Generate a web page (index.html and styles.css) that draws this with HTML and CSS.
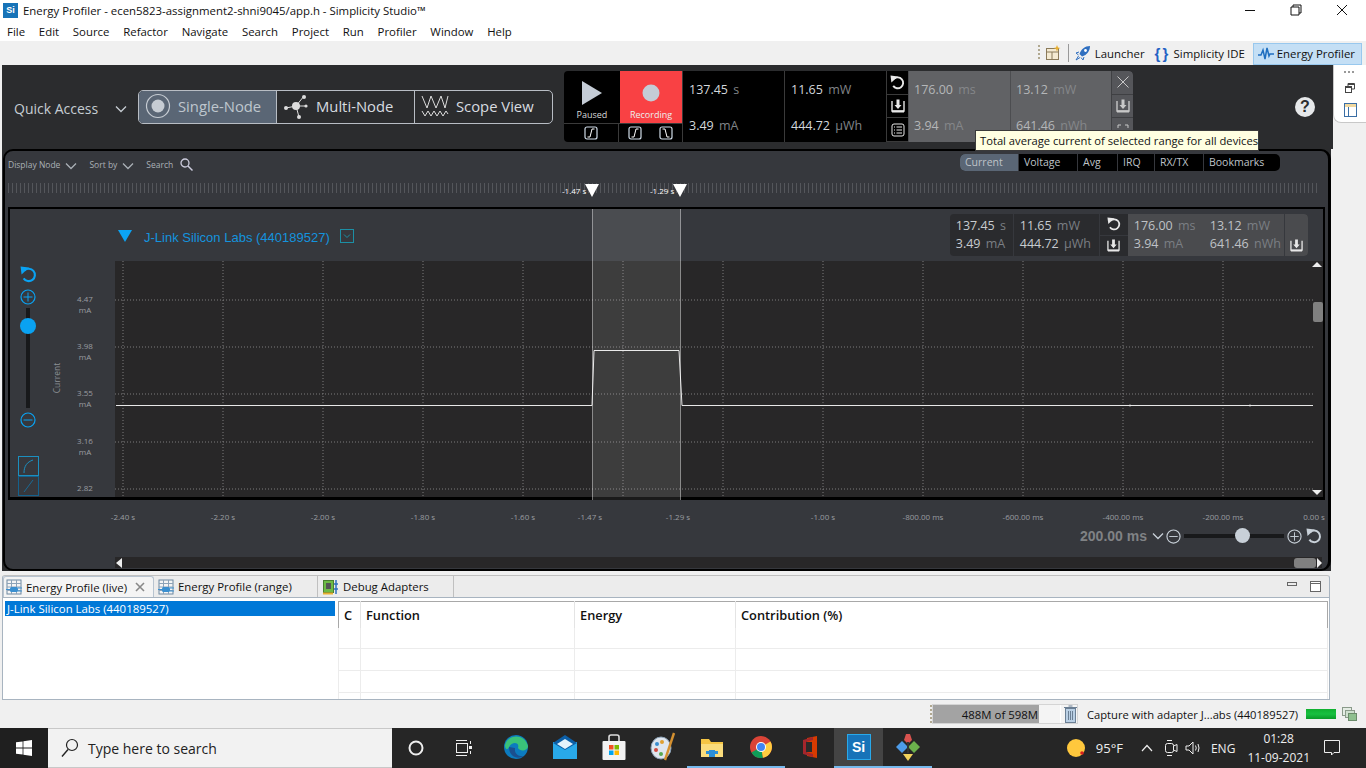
FILE: index.html
```html
<!DOCTYPE html>
<html lang="en">
<head>
    <meta charset="UTF-8">
    <title>Energy Profiler - Simplicity Studio</title>
    <link rel="stylesheet" href="styles.css">
</head>
<body>
<svg class="defs" width="0" height="0">
    <symbol id="i-reset" viewBox="0 0 16 16">
        <path d="M4.2 4.2 A5.8 5.8 0 1 1 3.4 11.6" fill="none" stroke="currentColor" stroke-width="2"/>
        <path d="M0.5 0.5 L8.5 1.5 L1.5 8 Z" fill="currentColor"/>
    </symbol>
    <symbol id="i-save" viewBox="0 0 14 14">
        <path d="M5.5 0.5 H8.5 V6 H10.5 L7 10 L3.5 6 H5.5 Z" fill="currentColor"/>
        <path d="M1 2 V12 H13 V2" fill="none" stroke="currentColor" stroke-width="1.4"/>
        <path d="M1 12.5 H13" stroke="currentColor" stroke-width="2"/>
    </symbol>
    <symbol id="i-chev" viewBox="0 0 12 8">
        <path d="M1 1.5 L6 6.5 L11 1.5" fill="none" stroke="currentColor" stroke-width="1.3"/>
    </symbol>
    <symbol id="i-plus" viewBox="0 0 16 16">
        <circle cx="8" cy="8" r="7" fill="none" stroke="currentColor" stroke-width="1.2"/>
        <path d="M3.5 8 H12.5 M8 3.5 V12.5" stroke="currentColor"/>
    </symbol>
    <symbol id="i-minus" viewBox="0 0 16 16">
        <circle cx="8" cy="8" r="7" fill="none" stroke="currentColor" stroke-width="1.2"/>
        <path d="M3.5 8 H12.5" stroke="currentColor"/>
    </symbol>
    <symbol id="i-rise" viewBox="0 0 14 14">
        <rect x="1" y="1" width="12" height="12" rx="2" fill="none" stroke="currentColor" stroke-width="1.2"/>
        <path d="M3.5 11 H6 L8 3 H10.5" fill="none" stroke="#fff"/>
    </symbol>
    <symbol id="i-fall" viewBox="0 0 14 14">
        <rect x="1" y="1" width="12" height="12" rx="2" fill="none" stroke="currentColor" stroke-width="1.2"/>
        <path d="M3.5 3 H6 L8 11 H10.5" fill="none" stroke="#fff"/>
    </symbol>
    <symbol id="i-view" viewBox="0 0 16 16">
        <rect x="1" y="1" width="14" height="14" fill="#f5f5f5" stroke="#6d87a0"/>
        <path d="M1 4.5 H15 M1 8 H15 M1 11.5 H15 M5.5 1 V15 M10.5 1 V15" stroke="#8da3b8"/>
        <rect x="4" y="8" width="8" height="5" rx="1.5" fill="#3a8fd0"/>
        <path d="M0 10.5 H4 M12 9 H16 M12 12 H16" stroke="#3a8fd0"/>
    </symbol>
</svg>

<header class="titlebar">
    <span class="si-logo">Si</span>
    <span class="title-text">Energy Profiler - ecen5823-assignment2-shni9045/app.h - Simplicity Studio™</span>
    <div class="win-btns">
        <svg width="12" height="12" viewBox="0 0 12 12"><path d="M1 6.5 H11" stroke="#111"/></svg>
        <svg width="12" height="12" viewBox="0 0 12 12"><path d="M3 3 V1 H11 V9 H9 M1 3 H9 V11 H1 Z" fill="none" stroke="#111"/></svg>
        <svg width="12" height="12" viewBox="0 0 12 12"><path d="M1 1 L11 11 M11 1 L1 11" stroke="#111"/></svg>
    </div>
</header>

<nav class="menubar">
    <span>File</span><span>Edit</span><span>Source</span><span>Refactor</span><span>Navigate</span><span>Search</span><span>Project</span><span>Run</span><span>Profiler</span><span>Window</span><span>Help</span>
</nav>

<div class="toolbar">
    <span class="grip"></span>
    <svg class="open-persp" width="16" height="16" viewBox="0 0 16 16">
        <rect x="1.5" y="3.5" width="12" height="11" fill="#f4ead2" stroke="#8a7a5a"/>
        <path d="M1.5 7 H13.5 M7 7 V14.5" stroke="#8a7a5a"/>
        <path d="M12 0 L13 2.5 L15.5 3 L13 4 L12 6.5 L11 4 L8.5 3 L11 2.5 Z" fill="#e8b030"/>
    </svg>
    <span class="tool-sep"></span>
    <div class="persp">
        <svg width="16" height="16" viewBox="0 0 16 16"><path d="M15 1 C10 1 6 4 4.5 9 L7 11.5 C12 10 15 6 15 1 Z" fill="#2f6fc0"/><path d="M4 7 L1 8 L3.5 10 M9 12 L8 15 L6 12.5 M3.5 11 L1 15 L5 12.5" fill="none" stroke="#2f6fc0"/><circle cx="10.5" cy="5.5" r="1.4" fill="#fff"/></svg>
        <span>Launcher</span>
    </div>
    <div class="persp">
        <span class="braces">{ }</span>
        <span>Simplicity IDE</span>
    </div>
    <div class="persp persp-on">
        <svg width="16" height="14" viewBox="0 0 16 14"><path d="M0 8 H3 L5 3 L7 12 L9 1 L11 9 L12 7 H16" fill="none" stroke="#1f6fc0" stroke-width="1.5"/></svg>
        <span>Energy Profiler</span>
    </div>
</div>

<div class="workbench">
    <div class="work-left">
        <section class="profiler">
            <div class="strip">
                <span class="quick">Quick Access</span>
                <svg class="quick-chev" width="12" height="8"><use href="#i-chev"/></svg>
                <div class="segments">
                    <div class="segment segment-on">
                        <svg width="26" height="26" viewBox="0 0 26 26"><circle cx="13" cy="13" r="11.5" fill="none" stroke="#c6ccd3" stroke-width="1.2"/><circle cx="13" cy="13" r="6.5" fill="#c6ccd3"/></svg>
                        <span>Single-Node</span>
                    </div>
                    <div class="segment">
                        <svg width="26" height="26" viewBox="0 0 26 26"><path d="M13 13 L21 3 M13 13 L3 15 M13 13 L23 13 M13 13 L16 24" stroke="#ddd"/><circle cx="13" cy="13" r="4" fill="#ddd"/><circle cx="21" cy="4" r="2" fill="#ddd"/><circle cx="3" cy="15" r="2" fill="#ddd"/><circle cx="23" cy="13" r="1.6" fill="#ddd"/><circle cx="16" cy="24" r="2" fill="#ddd"/></svg>
                        <span>Multi-Node</span>
                    </div>
                    <div class="segment">
                        <svg width="28" height="24" viewBox="0 0 28 24"><path d="M1 2 L6 14 L10 2 L15 14 L20 2 L24 14 L27 2" fill="none" stroke="#ddd"/><path d="M1 17 L4 22 L7 17 L10 22 L13 17 L16 22 L19 17 L22 22 L25 17 L27 20" fill="none" stroke="#ddd"/></svg>
                        <span>Scope View</span>
                    </div>
                </div>
                <div class="meter">
                    <div class="rec">
                        <div class="rec-top">
                            <div class="rec-play">
                                <svg width="22" height="24" viewBox="0 0 22 24"><path d="M1 0 L21 12 L1 24 Z" fill="#c4ccd6"/></svg>
                                <span>Paused</span>
                            </div>
                            <div class="rec-red">
                                <svg width="18" height="18" viewBox="0 0 18 18"><circle cx="9" cy="9" r="8.5" fill="#c4ccd6"/></svg>
                                <span>Recording</span>
                            </div>
                        </div>
                        <div class="rec-bottom">
                            <div class="rec-cell rec-cell-a"><svg width="14" height="14"><use href="#i-rise"/></svg></div>
                            <div class="rec-cell rec-cell-b">
                                <svg width="14" height="14"><use href="#i-rise"/></svg>
                                <svg width="14" height="14"><use href="#i-fall"/></svg>
                            </div>
                        </div>
                    </div>
                    <div class="reads read-time"><span>137.45 <i>s</i></span><span>3.49 <i>mA</i></span></div>
                    <div class="reads read-power"><span>11.65 <i>mW</i></span><span>444.72 <i>µWh</i></span></div>
                    <div class="meter-btns">
                        <span><svg width="15" height="15"><use href="#i-reset"/></svg></span>
                        <span><svg width="14" height="14"><use href="#i-save"/></svg></span>
                        <span><svg width="14" height="14" viewBox="0 0 14 14"><rect x="1" y="1" width="12" height="12" rx="2" fill="none" stroke="currentColor"/><path d="M3 4 H4 M3 7 H4 M3 10 H4 M5.5 4 H11 M5.5 7 H11 M5.5 10 H11" stroke="currentColor"/></svg></span>
                    </div>
                    <div class="reads reads-gray read-range-a"><span>176.00 <i>ms</i></span><span>3.94 <i>mA</i></span></div>
                    <div class="reads reads-gray read-range-b"><span>13.12 <i>mW</i></span><span>641.46 <i>nWh</i></span></div>
                    <div class="meter-btns meter-btns-gray">
                        <span><svg width="14" height="14" viewBox="0 0 14 14"><path d="M1.5 1.5 L12.5 12.5 M12.5 1.5 L1.5 12.5" stroke="currentColor"/></svg></span>
                        <span><svg width="14" height="14"><use href="#i-save"/></svg></span>
                        <span class="expand"><svg width="12" height="12" viewBox="0 0 12 12"><path d="M1 4 V1 H4 M8 1 H11 V4" fill="none" stroke="currentColor"/></svg></span>
                    </div>
                </div>
                <span class="help">?</span>
            </div>

            <div class="card-wrap">
                <div class="card">
                    <div class="card-head">
                        <div class="filters">
                            <span>Display Node</span>
                            <svg width="12" height="8"><use href="#i-chev"/></svg>
                            <span class="filter-next">Sort by</span>
                            <svg width="12" height="8"><use href="#i-chev"/></svg>
                            <span class="filter-next">Search</span>
                            <svg class="filter-glass" width="13" height="13" viewBox="0 0 13 13"><circle cx="5" cy="5" r="4" fill="none" stroke="#ccd" stroke-width="1.3"/><path d="M8 8 L12.5 12.5" stroke="#ccd" stroke-width="1.5"/></svg>
                        </div>
                        <div class="graph-tabs">
                            <span class="gt gt-on">Current</span>
                            <span class="gt gt-voltage">Voltage</span>
                            <span class="gt gt-avg">Avg</span>
                            <span class="gt gt-irq">IRQ</span>
                            <span class="gt gt-rx">RX/TX</span>
                            <span class="gt gt-book">Bookmarks</span>
                        </div>
                    </div>

                    <div class="ruler">
                        <div class="ruler-ticks"></div>
                        <span class="marker" style="left:557px">-1.47 s</span>
                        <span class="marker" style="left:645px">-1.29 s</span>
                    </div>

                    <div class="graph">
                        <div class="graph-head">
                            <svg class="node-arrow" width="14" height="12" viewBox="0 0 14 12"><path d="M0 0 H14 L7 12 Z" fill="#0ba4f5"/></svg>
                            <span class="node-name">J-Link Silicon Labs (440189527)</span>
                            <svg class="node-drop" width="14" height="14" viewBox="0 0 14 14"><rect x="0.5" y="0.5" width="13" height="13" fill="none" stroke="#1c8fa5"/><path d="M4 5.5 L7 8.5 L10 5.5" fill="none" stroke="#1c8fa5"/></svg>
                            <div class="node-reads">
                                <div class="nr nr-time"><span>137.45 <i>s</i></span><span>3.49 <i>mA</i></span></div>
                                <div class="nr nr-power"><span>11.65 <i>mW</i></span><span>444.72 <i>µWh</i></span></div>
                                <div class="nr-btns">
                                    <span><svg width="14" height="14"><use href="#i-reset"/></svg></span>
                                    <span><svg width="13" height="13"><use href="#i-save"/></svg></span>
                                </div>
                                <div class="nr nr-range nr-range-a"><span>176.00 <i>ms</i></span><span>3.94 <i>mA</i></span></div>
                                <div class="nr nr-range nr-range-b"><span>13.12 <i>mW</i></span><span>641.46 <i>nWh</i></span></div>
                                <div class="nr-btns nr-btns-gray">
                                    <span></span>
                                    <span><svg width="13" height="13"><use href="#i-save"/></svg></span>
                                </div>
                            </div>
                        </div>
                        <div class="graph-body">
                            <div class="gutter">
                                <div class="vzoom">
                                    <svg class="vz-reset" width="17" height="17"><use href="#i-reset"/></svg>
                                    <svg class="vz-plus" width="16" height="16"><use href="#i-plus"/></svg>
                                    <div class="vz-track"><span class="vz-thumb"></span></div>
                                    <svg class="vz-minus" width="16" height="16"><use href="#i-minus"/></svg>
                                    <span class="vz-btn vz-btn-on"><svg width="19" height="18" viewBox="0 0 19 18"><path d="M5 16 C5 9 8 5 14 3" fill="none" stroke="#1c8fbf"/></svg></span>
                                    <span class="vz-btn"><svg width="19" height="18" viewBox="0 0 19 18"><path d="M5 15 L14 3" fill="none" stroke="#1b6a94"/></svg></span>
                                </div>
                                <span class="axis-name">Current</span>
                                <span class="ylabel" style="top:32px">4.47<br>mA</span>
                                <span class="ylabel" style="top:79px">3.98<br>mA</span>
                                <span class="ylabel" style="top:126px">3.55<br>mA</span>
                                <span class="ylabel" style="top:174px">3.16<br>mA</span>
                                <span class="ylabel" style="top:221px">2.82<br>mA</span>
                            </div>
                            <svg class="plot" width="1208" height="236" viewBox="0 0 1208 236">
                                <g class="grid">
                                    <path d="M8 0 V236 M108 0 V236 M208 0 V236 M308 0 V236 M408 0 V236 M508 0 V236 M608 0 V236 M708 0 V236 M808 0 V236 M908 0 V236 M1008 0 V236 M1108 0 V236"/>
                                    <path d="M0 39 H1198 M0 86 H1198 M0 133 H1198 M0 181 H1198 M0 228 H1198"/>
                                </g>
                                <path class="trace" d="M1 144.5 H477 L479 89.5 H564 L567 144.5 H1198"/>
                                <path class="trace" d="M1015 143.5 V145.5 M1135 143.5 V145.5"/>
                                <path d="M1198 6 L1203 1 L1208 6 Z" transform="translate(-1 0)" fill="#eee"/>
                                <path d="M1197 229 H1207 L1202 234 Z" fill="#eee"/>
                                <rect x="1198" y="41" width="10" height="20" rx="2" fill="#808080"/>
                            </svg>
                        </div>
                        <div class="band"></div>
                    </div>

                    <div class="xaxis">
                        <span class="xlabel" style="left:118px">-2.40 s</span>
                        <span class="xlabel" style="left:218px">-2.20 s</span>
                        <span class="xlabel" style="left:318px">-2.00 s</span>
                        <span class="xlabel" style="left:418px">-1.80 s</span>
                        <span class="xlabel" style="left:518px">-1.60 s</span>
                        <span class="xlabel" style="left:585px">-1.47 s</span>
                        <span class="xlabel" style="left:673px">-1.29 s</span>
                        <span class="xlabel" style="left:818px">-1.00 s</span>
                        <span class="xlabel" style="left:918px">-800.00 ms</span>
                        <span class="xlabel" style="left:1018px">-600.00 ms</span>
                        <span class="xlabel" style="left:1118px">-400.00 ms</span>
                        <span class="xlabel" style="left:1218px">-200.00 ms</span>
                        <span class="xlabel" style="left:1309px">0.00 s</span>
                    </div>

                    <div class="hzoom">
                        <span class="hz-value">200.00 ms</span>
                        <svg class="hz-chev" width="12" height="8"><use href="#i-chev"/></svg>
                        <svg width="15" height="15"><use href="#i-minus"/></svg>
                        <div class="hz-track"><span class="hz-thumb"></span></div>
                        <svg width="15" height="15"><use href="#i-plus"/></svg>
                        <svg class="hz-reset" width="16" height="16"><use href="#i-reset"/></svg>
                    </div>

                    <div class="hscroll">
                        <svg class="hs-left" width="6" height="10" viewBox="0 0 6 10"><path d="M6 0 V10 L0 5 Z" fill="#eee"/></svg>
                        <span class="hs-thumb"></span>
                        <svg width="5" height="10" viewBox="0 0 5 10"><path d="M0 0 V10 L5 5 Z" fill="#eee"/></svg>
                    </div>
                </div>
            </div>
            <div class="tooltip">Total average current of selected range for all devices</div>
        </section>

        <section class="lower">
            <div class="lower-tabs">
                <div class="ltab ltab-on">
                    <svg width="16" height="16"><use href="#i-view"/></svg>
                    <span>Energy Profile (live)</span>
                    <svg class="ltab-x" width="10" height="10" viewBox="0 0 10 10"><path d="M1 1 L9 9 M9 1 L1 9" stroke="#888" stroke-width="1.6"/></svg>
                </div>
                <div class="ltab ltab-range">
                    <svg width="16" height="16"><use href="#i-view"/></svg>
                    <span>Energy Profile (range)</span>
                </div>
                <div class="ltab ltab-debug">
                    <svg width="16" height="16" viewBox="0 0 16 16"><rect x="0.5" y="1.5" width="10" height="12" fill="#6dbb45" stroke="#4a7f30"/><rect x="3" y="4" width="5" height="6" fill="#555"/><path d="M0 14.5 H10" stroke="#e8b030" stroke-width="2"/><path d="M13 1 V15 M11 5 H15 M11 10 H15" stroke="#2f6fc0" stroke-width="1.5"/></svg>
                    <span>Debug Adapters</span>
                </div>
                <div class="lower-btns">
                    <svg width="10" height="5"><rect x="0.5" y="0.5" width="9" height="3" fill="none" stroke="#666"/></svg>
                    <svg width="11" height="11"><rect x="0.5" y="0.5" width="10" height="10" fill="#fff" stroke="#666"/><path d="M0 2.5 H11" stroke="#666"/></svg>
                </div>
            </div>
            <div class="lower-body">
                <div class="adapters">
                    <div class="adapter-on">J-Link Silicon Labs (440189527)</div>
                </div>
                <table class="funcs">
                    <thead>
                        <tr><th class="col-c">C</th><th class="col-f">Function</th><th class="col-e">Energy</th><th>Contribution (%)</th></tr>
                    </thead>
                    <tbody>
                        <tr class="row-a"><td></td><td></td><td></td><td></td></tr>
                        <tr><td></td><td></td><td></td><td></td></tr>
                        <tr><td></td><td></td><td></td><td></td></tr>
                        <tr class="row-z"><td></td><td></td><td></td><td></td></tr>
                    </tbody>
                </table>
            </div>
        </section>
    </div>

    <aside class="trim">
        <div class="trim-box">
            <span class="trim-dots"></span>
            <svg width="10" height="10" viewBox="0 0 10 10"><path d="M3 3 V0.5 H9.5 V6 H7" fill="none" stroke="#444"/><rect x="0.5" y="3.5" width="6" height="6" fill="none" stroke="#444"/><path d="M0 4.5 H7 M3 1.5 H10" stroke="#444"/></svg>
            <svg width="13" height="14" viewBox="0 0 13 14"><rect x="0.5" y="0.5" width="12" height="13" fill="#fff" stroke="#3a6ea5"/><rect x="1" y="1" width="11" height="3" fill="#f0d8a0"/><path d="M4.5 4 V13" stroke="#3a6ea5"/></svg>
        </div>
    </aside>
</div>

<footer class="statusbar">
    <span class="grip grip-status"></span>
    <div class="heap">
        <div class="heap-bar"><span class="heap-used"></span><span class="heap-text">488M of 598M</span></div>
        <svg class="heap-trash" width="13" height="18" viewBox="0 0 13 18"><rect x="1.5" y="3.5" width="10" height="14" fill="#b9cfe4" stroke="#6b7f94"/><path d="M0 2.5 H13 M4.5 1 H8.5 M4.5 6 V15 M6.5 6 V15 M8.5 6 V15" stroke="#6b7f94"/></svg>
    </div>
    <span class="capture">Capture with adapter J...abs (440189527)</span>
    <span class="capture-bar"></span>
    <svg width="15" height="14" viewBox="0 0 15 14"><rect x="0.5" y="0.5" width="9" height="8" fill="#e4ece4" stroke="#8a9a8a"/><rect x="3.5" y="3.5" width="9" height="7" fill="#cfe0cf" stroke="#8a9a8a"/><rect x="6.5" y="6.5" width="8" height="7" fill="#8fc08f" stroke="#6a8a6a"/></svg>
</footer>

<div class="taskbar">
    <div class="start">
        <svg width="16" height="16" viewBox="0 0 16 16"><path d="M0 2.3 L6.6 1.4 V7.5 H0 Z M7.4 1.3 L16 0 V7.5 H7.4 Z M0 8.4 H6.6 V14.6 L0 13.7 Z M7.4 8.4 H16 V16 L7.4 14.7 Z" fill="#fff"/></svg>
    </div>
    <div class="searchbox">
        <svg width="18" height="20" viewBox="0 0 18 20"><circle cx="11" cy="7" r="5.5" fill="none" stroke="#222" stroke-width="1.2"/><path d="M7 11.5 L1 18.5" stroke="#222" stroke-width="1.4"/></svg>
        <span>Type here to search</span>
    </div>
    <div class="task-tool"><svg width="16" height="16" viewBox="0 0 16 16"><circle cx="8" cy="8" r="6.5" fill="none" stroke="#eee" stroke-width="2"/></svg></div>
    <div class="task-tool"><svg width="18" height="18" viewBox="0 0 18 18"><path d="M1 1.5 H12 M1 16.5 H12" stroke="#eee"/><rect x="1.5" y="4.5" width="11" height="9" fill="none" stroke="#eee"/><rect x="14" y="7" width="3" height="3" fill="#eee"/><path d="M15.5 2 V5 M15.5 12 V15" stroke="#eee"/></svg></div>
    <div class="task-apps">
        <div class="app"><svg width="24" height="28" viewBox="0 0 24 28"><circle cx="12" cy="14" r="12" fill="#0c7bbf"/><path d="M1 12 C3 2 20 -1 24 13 C24 18 16 19 14 15 C16 9 8 8 5 14 C3 18 1 16 1 12 Z" fill="#3ac27a"/><path d="M5 14 C5 24 14 27 20 23 C15 24 10 21 11 15 Z" fill="#1b4f8f"/></svg></div>
        <div class="app"><svg width="24" height="24" viewBox="0 0 24 24"><rect x="0" y="7" width="24" height="17" fill="#29a9ea"/><path d="M0 8 L12 0 L24 8 L12 15 Z" fill="#0c5fa8"/><path d="M4 9 L12 4 L20 9 L12 14 Z" fill="#e6f3fb"/></svg></div>
        <div class="app"><svg width="24" height="26" viewBox="0 0 24 26"><path d="M7 8 V3 Q7 1 9 1 H15 Q17 1 17 3 V8" fill="none" stroke="#ddd" stroke-width="1.6"/><rect x="0.5" y="7" width="23" height="19" rx="1" fill="#f3f3f3"/><rect x="7" y="11" width="4.5" height="4.5" fill="#f25022"/><rect x="12.5" y="11" width="4.5" height="4.5" fill="#7fba00"/><rect x="7" y="16.5" width="4.5" height="4.5" fill="#00a4ef"/><rect x="12.5" y="16.5" width="4.5" height="4.5" fill="#ffb900"/></svg></div>
        <div class="app"><svg width="26" height="30" viewBox="0 0 26 30"><ellipse cx="11" cy="16" rx="10" ry="11" fill="#dfe6ee" stroke="#8aa0b5"/><circle cx="7" cy="12" r="2" fill="#3a8fd0"/><circle cx="12" cy="10" r="2" fill="#e0a030"/><circle cx="6" cy="18" r="2" fill="#d04a40"/><circle cx="11" cy="22" r="2" fill="#58a850"/><path d="M24 1 L15 28" stroke="#d49030" stroke-width="2.4"/></svg></div>
        <div class="app"><svg width="22" height="22" viewBox="0 0 22 22"><path d="M0 3 H8 L10 6 H22 V21 H0 Z" fill="#f5c544"/><rect x="0" y="8" width="22" height="13" fill="#fadc7c"/><path d="M8 21 V14 H14 V21" fill="#2b8fd8"/><rect x="5" y="15" width="12" height="3" fill="#2b8fd8"/></svg></div>
        <div class="app"><svg width="22" height="22" viewBox="0 0 22 22"><circle cx="11" cy="11" r="11" fill="#db4437"/><path d="M11 11 L1.5 16.5 A11 11 0 0 0 13 21.8 Z" fill="#0f9d58"/><path d="M11 11 L20.5 5.5 A11 11 0 0 1 13 21.8 Z" fill="#ffcd40"/><circle cx="11" cy="11" r="5" fill="#fff"/><circle cx="11" cy="11" r="4" fill="#4285f4"/></svg></div>
        <div class="app"><svg width="18" height="22" viewBox="0 0 18 22"><path d="M6 2 L16 0 V22 L6 20 Z" fill="#d83b01"/><path d="M2 4 L12 1 V4 L5 6 V16 L12 18 V21 L2 18 Z" fill="#a4262c"/><rect x="5" y="6" width="6" height="10" fill="#2a2a2a"/></svg></div>
        <div class="app app-lit"><span class="si-tile">Si</span></div>
        <div class="app"><svg width="26" height="28" viewBox="0 0 26 28"><path d="M1 14 L7 8 L13 14 L7 20 Z" fill="#4d9be8"/><path d="M13 14 L19 8 L25 14 L19 20 Z" fill="#6cb04c"/><path d="M8 21 H18 L13 28 Z" fill="#f1d25c"/><path d="M9 7 L11 1 H15 L17 7 L13 11 Z" fill="#d9534f"/><path d="M13 9 V20" stroke="#333" stroke-width="2"/></svg></div>
    </div>
    <div class="tray">
        <svg class="tray-sun" width="18" height="22" viewBox="0 0 18 22"><circle cx="9" cy="11" r="9" fill="#ffc83d"/><circle cx="15" cy="16" r="1.8" fill="#d92020"/></svg>
        <span class="tray-temp">95°F</span>
        <svg class="tray-up" width="12" height="8" viewBox="0 0 12 8"><path d="M1 7 L6 1.5 L11 7" fill="none" stroke="#eee" stroke-width="1.2"/></svg>
        <svg class="tray-cam" width="14" height="16" viewBox="0 0 14 16"><rect x="1.5" y="3.5" width="8" height="9" rx="2" fill="none" stroke="#eee"/><path d="M9.5 6 L13 4.5 V11.5 L9.5 10 M3 0.5 H8 M3 15.5 H8" fill="none" stroke="#eee"/></svg>
        <svg class="tray-vol" width="17" height="14" viewBox="0 0 17 14"><path d="M1 5 H4 L8 1 V13 L4 9 H1 Z" fill="none" stroke="#eee"/><path d="M10.5 4.5 Q12 7 10.5 9.5 M13 3 Q15 7 13 11" fill="none" stroke="#eee"/></svg>
        <span class="tray-lang">ENG</span>
        <div class="clock"><span>01:28</span><span>11-09-2021</span></div>
        <svg class="tray-note" width="16" height="16" viewBox="0 0 16 16"><path d="M0.5 0.5 H15.5 V12.5 H10 L7.5 15 V12.5 H0.5 Z" fill="none" stroke="#eee"/></svg>
    </div>
</div>
</body>
</html>
```

FILE: styles.css
```css
* {
    margin: 0;
    padding: 0;
    box-sizing: border-box;
}

html, body {
    width: 1366px;
    height: 768px;
    overflow: hidden;
}

body {
    background: #f0f0f0;
    font-family: "Open Sans", "Noto Sans", sans-serif;
    color: #111;
    font-size: 12px;
}

i {
    font-style: normal;
}

.defs {
    position: absolute;
}

/* window chrome */
.titlebar {
    height: 21px;
    background: #fff;
    display: flex;
    align-items: center;
    padding-left: 3px;
}

.si-logo {
    width: 15px;
    height: 15px;
    background: #1773b8;
    color: #fff;
    font-family: "Liberation Sans", sans-serif;
    font-size: 9px;
    font-weight: bold;
    text-align: center;
    line-height: 15px;
    margin-right: 5px;
}

.title-text {
    font-size: 11.4px;
}

.win-btns {
    margin-left: auto;
    display: flex;
    gap: 34px;
    padding-right: 18px;
    margin-top: -1px;
}

.menubar {
    height: 20px;
    background: #fff;
    display: flex;
    align-items: center;
    padding-left: 7px;
    gap: 13.8px;
    font-size: 11.4px;
}

.toolbar {
    height: 24px;
    display: flex;
    align-items: center;
    justify-content: flex-end;
    padding-right: 4px;
    font-size: 11.4px;
}

.grip {
    width: 2px;
    height: 16px;
    background: repeating-linear-gradient(#b0a890 0 2px, transparent 2px 4px);
}

.open-persp {
    margin-left: 5px;
}

.tool-sep {
    width: 1px;
    height: 18px;
    background: #999;
    margin: 0 6px 0 7px;
}

.persp {
    display: flex;
    align-items: center;
    gap: 4px;
    height: 22px;
    padding-right: 10px;
}

.braces {
    color: #2462c4;
    font-family: "Liberation Sans", sans-serif;
    font-weight: bold;
    font-size: 15px;
    letter-spacing: -1px;
    width: 15px;
}

.persp-on {
    background: #c4dff5;
    border: 1px solid #98c8ee;
    padding: 0 6px 0 4px;
    margin-left: -2px;
    gap: 3px;
    margin-top: 1px;
    height: 22px;
}

/* main area */
.workbench {
    height: 635px;
    display: flex;
}

.work-left {
    width: 1333px;
    padding-left: 2px;
    display: flex;
    flex-direction: column;
}

.profiler {
    position: relative;
    height: 506px;
    color: #ccd;
}

.strip {
    height: 84px;
    background: #2b2c2e;
    display: flex;
    align-items: center;
    padding-left: 12px;
}

.quick {
    font-size: 14px;
    color: #c6ccd3;
    width: 101px;
    margin-top: 3px;
}

.quick-chev {
    color: #c6ccd3;
    margin-top: 4px;
}

.segments {
    display: flex;
    width: 415px;
    height: 34px;
    margin-left: 11px;
    border: 1px solid #b8bdc4;
    border-radius: 5px;
    overflow: hidden;
}

.segment {
    flex: 1;
    display: flex;
    align-items: center;
    gap: 7px;
    padding: 0 0 2px 6px;
    font-size: 14.8px;
    color: #d8dce0;
    border-left: 1px solid #b8bdc4;
}

.segment:first-child {
    border-left: 0;
}

.segment-on {
    background: #5a6675;
    color: #bfc6ce;
}

.meter {
    display: flex;
    width: 569px;
    height: 71px;
    margin: -1px 0 0 11px;
    background: #000;
    border-radius: 4px;
    overflow: hidden;
}

.rec {
    width: 118px;
    display: flex;
    flex-direction: column;
    flex-shrink: 0;
}

.rec-top {
    display: flex;
    height: 52px;
}

.rec-play, .rec-red {
    display: flex;
    flex-direction: column;
    align-items: center;
    font-size: 9px;
    color: #d8d8d8;
}

.rec-play {
    width: 56px;
    padding-top: 10px;
    gap: 3px;
}

.rec-red {
    width: 62px;
    padding-top: 13px;
    gap: 6px;
    background: #f94144;
    color: #eee;
}

.rec-bottom {
    display: flex;
    height: 19px;
    border-top: 1px solid #3a3a3a;
    margin-top: 0;
}

.rec-cell {
    display: flex;
    align-items: center;
    justify-content: center;
    color: #d0dce8;
}

.rec-cell-a {
    width: 55px;
    border-right: 1px solid #3a3a3a;
}

.rec-cell-b {
    width: 63px;
    gap: 17px;
}

.reads {
    display: flex;
    flex-direction: column;
    gap: 18px;
    padding: 10px 0 0 6px;
    border-left: 1px solid #3a3a3a;
    font-size: 12.5px;
    line-height: 18px;
    color: #d4d8dc;
    flex-shrink: 0;
}

.reads i {
    color: #808488;
    margin-left: 2px;
}

.read-time {
    width: 102px;
}

.read-power {
    width: 102px;
}

.meter-btns {
    width: 22px;
    display: flex;
    flex-direction: column;
    border-left: 1px solid #3a3a3a;
    color: #e8e8e8;
    flex-shrink: 0;
}

.meter-btns span {
    flex: 1;
    display: flex;
    align-items: center;
    justify-content: center;
    border-bottom: 1px solid #3a3a3a;
}

.reads-gray {
    background: #616265;
    color: #b4b6b8;
    border-left-color: #4c4d50;
    padding-left: 5px;
}

.reads-gray i {
    color: #85878a;
}

.read-range-a {
    width: 102px;
}

.read-range-b {
    width: 101px;
}

.meter-btns-gray {
    background: #55565a;
    border-left-color: #3f4043;
    color: #c8c8c8;
    flex: 1;
}

.meter-btns-gray span {
    border-bottom-color: #3f4043;
}

.help {
    width: 20px;
    height: 20px;
    border-radius: 50%;
    background: #e6e8ea;
    color: #2b2c2e;
    font-family: "Liberation Sans", sans-serif;
    font-weight: bold;
    font-size: 16px;
    line-height: 20px;
    text-align: center;
    margin-left: 162px;
}

.card-wrap {
    width: 1329px;
    height: 422px;
    padding-left: 1px;
    background: #2b2c2e;
}

.card {
    width: 1328px;
    height: 422px;
    background: #36383d;
    border: 2px solid #000;
    border-right-width: 3px;
    border-radius: 10px;
    position: relative;
    display: flex;
    flex-direction: column;
}

.card-head {
    height: 27px;
    flex-shrink: 0;
    display: flex;
    justify-content: space-between;
    padding: 3px 48px 0 3px;
}

.filters {
    display: flex;
    align-items: center;
    height: 20px;
    font-size: 8.5px;
    color: #aab0b6;
    gap: 5px;
    margin-top: 0;
}

.filters svg {
    color: #aab0b6;
    margin-top: 3px;
}

.filters .filter-glass {
    margin: 0 0 0 2px;
}

.filter-next {
    margin-left: 7px;
}

.graph-tabs {
    display: flex;
    height: 17px;
    background: #000;
    border-radius: 5px;
    overflow: hidden;
    font-size: 10.5px;
    color: #bfc3c8;
}

.gt {
    display: flex;
    align-items: center;
    padding: 0 0 1px 5px;
    border-left: 1px solid #36383d;
}

.gt-on {
    width: 58px;
    background: #5a6675;
    border-left: 0;
}

.gt-voltage {
    width: 59px;
}

.gt-avg {
    width: 40px;
}

.gt-irq {
    width: 37px;
}

.gt-rx {
    width: 49px;
}

.gt-book {
    width: 77px;
}

.ruler {
    height: 29px;
    flex-shrink: 0;
    position: relative;
}

.ruler-ticks {
    height: 10px;
    margin: 5px 11px 0 3px;
    background: repeating-linear-gradient(90deg, #54565b 0 1px, transparent 1px 4px);
}

.marker {
    position: absolute;
    top: 7px;
    width: 38px;
    font-size: 8px;
    line-height: 11px;
    color: #fff;
}

.marker::after {
    content: "";
    position: absolute;
    left: 23px;
    top: -1px;
    border-left: 7.5px solid transparent;
    border-right: 7.5px solid transparent;
    border-top: 13px solid #fff;
}

.graph {
    height: 293px;
    flex-shrink: 0;
    margin: 0 3px;
    border: 2px solid #000;
    border-bottom-width: 3px;
    position: relative;
    display: flex;
    flex-direction: column;
}

.graph-head {
    height: 52px;
    flex-shrink: 0;
    display: flex;
    align-items: center;
    padding-left: 108px;
}

.node-arrow {
    margin-top: 2px;
}

.node-name {
    margin: 4px 0 0 12px;
    font-family: "Liberation Sans", sans-serif;
    font-size: 13px;
    color: #1493de;
}

.node-drop {
    margin: 2px 0 0 10px;
}

.node-reads {
    position: relative;
    z-index: 2;
    margin-left: 596px;
    width: 358px;
    height: 42px;
    display: flex;
    background: #2a2b2e;
    border-radius: 4px;
    overflow: hidden;
    font-size: 12.5px;
    line-height: 18px;
    color: #c8ccd0;
}

.nr {
    display: flex;
    flex-direction: column;
    padding: 3px 0 0 6px;
}

.nr i {
    color: #7b7f84;
    margin-left: 2px;
}

.nr-time {
    width: 64px;
    border-right: 1px solid #36383d;
}

.nr-power {
    width: 86px;
    border-right: 1px solid #36383d;
}

.nr-btns {
    width: 28px;
    display: flex;
    flex-direction: column;
    color: #e8e8e8;
}

.nr-btns span {
    flex: 1;
    display: flex;
    align-items: center;
    justify-content: center;
}

.nr-btns span:first-child {
    border-bottom: 1px solid #36383d;
}

.nr-range {
    background: #4a4b4e;
    color: #bfc2c6;
}

.nr-range-a {
    width: 76px;
}

.nr-range-b {
    width: 80px;
}

.nr-btns-gray {
    flex: 1;
    background: #4a4b4e;
    border-left: 1px solid #36383d;
}

.nr-btns-gray span:first-child {
    border-bottom: 0;
}

.graph-body {
    flex: 1;
    display: flex;
    min-height: 0;
}

.gutter {
    width: 105px;
    flex-shrink: 0;
    position: relative;
    overflow: hidden;
}

.vzoom {
    width: 22px;
    margin-left: 7px;
    padding-top: 5px;
    display: flex;
    flex-direction: column;
    align-items: center;
    color: #0aa2f2;
}

.vz-plus {
    margin-top: 6px;
}

.vz-track {
    width: 4px;
    height: 100px;
    margin-top: 3px;
    background: #18191b;
    position: relative;
}

.vz-thumb {
    position: absolute;
    left: -6px;
    top: 10px;
    width: 16px;
    height: 16px;
    border-radius: 50%;
    background: #0aa2f2;
}

.vz-minus {
    margin-top: 4px;
}

.vz-btn {
    width: 21px;
    height: 20px;
    border: 1px solid #15618c;
    background: #36383d;
    display: block;
}

.vz-btn-on {
    margin-top: 28px;
    border-color: #1c8fbf;
}

.axis-name {
    position: absolute;
    left: 32px;
    top: 111px;
    font-size: 8.5px;
    line-height: 12px;
    color: #8d9196;
    transform: rotate(-90deg);
    transform-origin: center;
}

.ylabel {
    position: absolute;
    left: 60px;
    width: 30px;
    text-align: center;
    font-size: 8px;
    line-height: 11px;
    color: #9a9da1;
}

.plot {
    flex-shrink: 0;
    background: #282728;
}

.grid path {
    fill: none;
    stroke: #7c7c7c;
    stroke-dasharray: 1 2;
}

.trace {
    fill: none;
    stroke: #e8e8e8;
    stroke-width: 1;
}

.band {
    position: absolute;
    top: 0;
    bottom: -3px;
    left: 582px;
    width: 89px;
    background: rgba(255, 255, 255, 0.1);
    border-left: 1px solid rgba(255, 255, 255, 0.4);
    border-right: 1px solid rgba(255, 255, 255, 0.4);
}

.xaxis {
    height: 26px;
    flex-shrink: 0;
    position: relative;
}

.xlabel {
    position: absolute;
    top: 11px;
    width: 60px;
    margin-left: -30px;
    text-align: center;
    font-size: 8px;
    line-height: 11px;
    color: #9a9da1;
    white-space: nowrap;
}

.hzoom {
    height: 20px;
    flex-shrink: 0;
    display: flex;
    align-items: center;
    justify-content: flex-end;
    padding-right: 6px;
    color: #c8d0d8;
}

.hz-value {
    font-family: "Liberation Sans", sans-serif;
    font-weight: bold;
    font-size: 14px;
    color: #808285;
}

.hz-chev {
    margin: 0 2px 0 5px;
}

.hz-track {
    width: 100px;
    height: 4px;
    margin: 0 3px;
    background: #18191b;
    position: relative;
}

.hz-thumb {
    position: absolute;
    left: 51px;
    top: -6px;
    width: 15px;
    height: 15px;
    border-radius: 50%;
    background: #c8d0d8;
}

.hz-reset {
    margin-left: 4px;
}

.hscroll {
    height: 11px;
    margin: 11px 6px 0 110px;
    background: #282728;
    display: flex;
    align-items: center;
    padding-left: 1px;
}

.hs-left {
    margin-right: auto;
}

.hs-thumb {
    width: 22px;
    height: 10px;
    border-radius: 3px;
    background: #808080;
    margin-right: 1px;
}

.tooltip {
    position: absolute;
    left: 973px;
    top: 65px;
    width: 284px;
    height: 21px;
    background: #ffffe1;
    border: 1px solid #3a3a3a;
    color: #111;
    font-size: 11.2px;
    line-height: 19px;
    padding-left: 4px;
    white-space: nowrap;
    z-index: 5;
}

/* lower views */
.lower {
    width: 1328px;
    height: 125px;
    margin-top: 4px;
    display: flex;
    flex-direction: column;
    border: 1px solid #a8b4c0;
    border-top-color: #c0c0c0;
    border-radius: 3px 3px 0 0;
    background: #ececec;
}

.lower-tabs {
    height: 22px;
    display: flex;
    align-items: center;
    font-size: 11.4px;
    border-bottom: 1px solid #a8b4c0;
    flex-shrink: 0;
}

.ltab {
    height: 21px;
    display: flex;
    align-items: center;
    gap: 4px;
    padding-left: 2px;
    border-right: 1px solid #c0c0c0;
}

.ltab-on {
    width: 151px;
    background: #f4f4f4;
    border-radius: 3px 3px 0 0;
    border: 1px solid #b8c4d0;
    border-bottom: 0;
}

.ltab-x {
    margin-left: 4px;
}

.ltab-range {
    width: 164px;
    padding-left: 4px;
}

.ltab-debug {
    width: 136px;
    padding-left: 5px;
}

.lower-btns {
    margin-left: auto;
    display: flex;
    align-items: center;
    gap: 13px;
    padding-right: 8px;
}

.lower-btns svg:first-child {
    margin-top: -4px;
}

.lower-body {
    flex: 1;
    display: flex;
    background: #fff;
    min-height: 0;
    padding: 3px 1px 0 2px;
}

.adapters {
    width: 333px;
    flex-shrink: 0;
}

.adapter-on {
    width: 330px;
    height: 15px;
    background: #0078d7;
    color: #fff;
    font-size: 11.4px;
    line-height: 15px;
    padding-left: 2px;
}

.funcs {
    width: 990px;
    height: 97px;
    table-layout: fixed;
    border-collapse: collapse;
    border: 1px solid #a8a8a8;
    border-bottom: 0;
    font-size: 12.8px;
}

.funcs th {
    height: 26px;
    text-align: left;
    font-weight: 600;
    padding-left: 5px;
    border-right: 1px solid #e4e4e4;
}

.funcs th:last-child {
    border-right: 0;
}

.funcs td {
    border: 1px solid #ececec;
    border-top: 0;
    height: 22px;
}

.funcs .row-a td {
    height: 21px;
}

.funcs .row-z td {
    height: 6px;
    border-bottom: 0;
}

.col-c {
    width: 22px;
}

.col-f {
    width: 214px;
}

.col-e {
    width: 161px;
}

.trim {
    flex: 1;
}

.trim-box {
    width: 33px;
    height: 58px;
    background: #fff;
    border: 1px solid #c8c8c8;
    border-right: 0;
    border-top: 0;
    border-radius: 0 0 0 8px;
    display: flex;
    flex-direction: column;
    align-items: center;
    gap: 10px;
    padding-top: 6px;
}

.trim-dots {
    width: 12px;
    height: 2px;
    background: repeating-linear-gradient(90deg, #999 0 2px, transparent 2px 4px);
}

/* status */
.statusbar {
    height: 28px;
    display: flex;
    align-items: center;
    font-size: 11.6px;
    padding-left: 930px;
}

.grip-status {
    height: 18px;
}

.heap {
    display: flex;
    align-items: center;
    height: 20px;
    width: 146px;
    border: 1px solid #d4d4d4;
    background: #f4f4f4;
}

.heap-bar {
    width: 128px;
    height: 18px;
    position: relative;
    display: flex;
    align-items: center;
    justify-content: flex-end;
    border-right: 1px solid #fff;
}

.heap-used {
    position: absolute;
    left: 0;
    top: 0;
    bottom: 0;
    width: 106px;
    background: #a3a3a3;
}

.heap-text {
    position: relative;
    margin-right: 22px;
    font-size: 11.4px;
}

.heap-trash {
    margin-left: 3px;
}

.capture {
    margin-left: 9px;
    width: 219px;
    white-space: nowrap;
    font-size: 11.2px;
}

.capture-bar {
    width: 30px;
    height: 10px;
    background: linear-gradient(#10b030, #18c040 50%, #0a9a28);
    margin-right: 6px;
}

/* taskbar */
.taskbar {
    height: 40px;
    background: #262626;
    display: flex;
    color: #eee;
}

.start {
    width: 48px;
    display: flex;
    align-items: center;
    justify-content: center;
    background: #1f1f1f;
}

.searchbox {
    width: 344px;
    background: #f2f2f2;
    border-top: 1px solid #c8c8c8;
    border-bottom: 1px solid #c8c8c8;
    display: flex;
    align-items: center;
    gap: 9px;
    padding-left: 13px;
    color: #222;
    font-size: 14px;
}

.task-tool {
    width: 48px;
    display: flex;
    align-items: center;
    justify-content: center;
}

.task-apps {
    display: flex;
    margin-left: 3px;
}

.app {
    width: 49px;
    display: flex;
    align-items: center;
    justify-content: center;
    border-bottom: 2px solid transparent;
}

.app:nth-child(n+5) {
    border-bottom: 2px solid #76b9ed;
    background-clip: padding-box;
}

.app:nth-child(7) {
    border-bottom-color: transparent;
}

.app-lit {
    background: #444;
}

.si-tile {
    width: 24px;
    height: 26px;
    background: #1773b8;
    border: 1px solid #29a9ea;
    color: #fff;
    font-family: "Liberation Sans", sans-serif;
    font-weight: bold;
    font-size: 14px;
    text-align: center;
    line-height: 24px;
}

.tray {
    margin-left: auto;
    display: flex;
    align-items: center;
    padding-right: 26px;
    font-size: 12px;
}

.tray-temp {
    margin-left: 11px;
    font-size: 13px;
}

.tray-up {
    margin-left: 18px;
}

.tray-cam {
    margin-left: 11px;
}

.tray-vol {
    margin-left: 7px;
}

.tray-lang {
    margin-left: 9px;
}

.clock {
    display: flex;
    flex-direction: column;
    align-items: center;
    gap: 3px;
    margin-left: 12px;
    line-height: 16px;
}

.tray-note {
    margin-left: 14px;
}
```
